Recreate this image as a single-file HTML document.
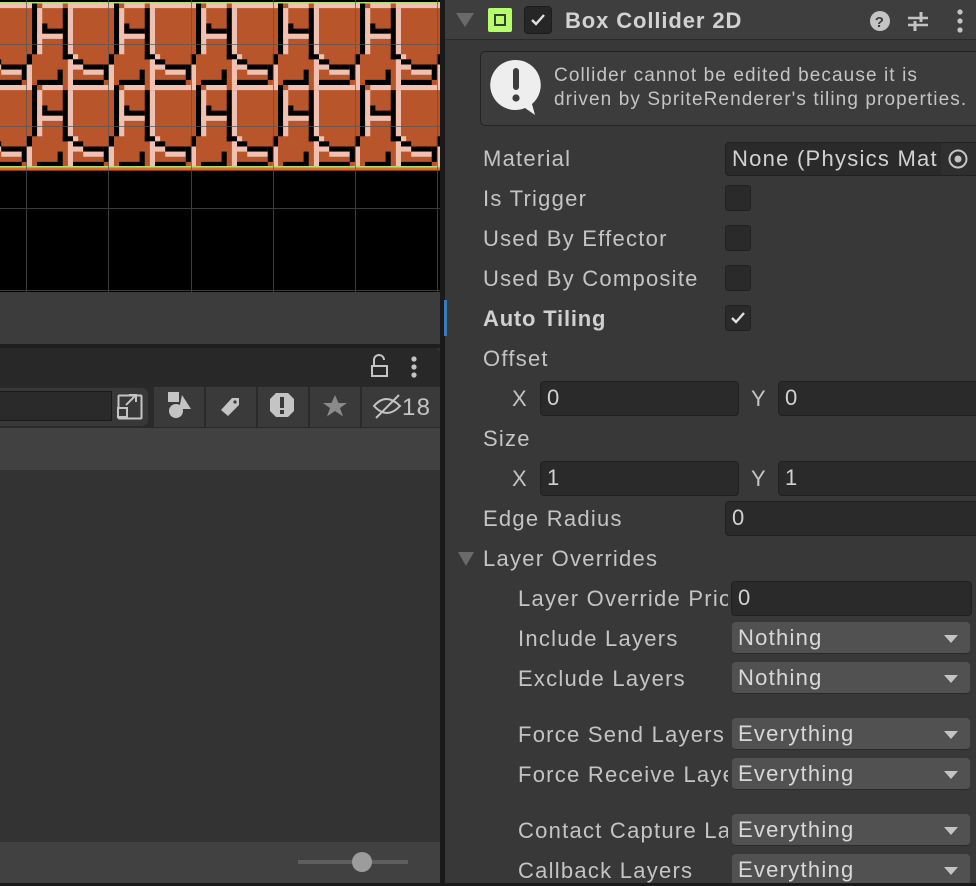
<!DOCTYPE html>
<html><head><meta charset="utf-8"><style>
*{margin:0;padding:0;box-sizing:border-box}
body{width:976px;height:886px;overflow:hidden;background:#383838;font-family:"Liberation Sans",sans-serif;color:#c4c4c4;position:relative;letter-spacing:1.25px}
.a{position:absolute}
.lbl{position:absolute;font-size:22px;line-height:26px;white-space:nowrap}
.fld{position:absolute;background:#2a2a2a;border:1px solid #212121;border-radius:4px;font-size:22px;line-height:32px;padding-left:6px;color:#d2d2d2;overflow:hidden;white-space:nowrap}
.cb{position:absolute;left:725px;width:26px;height:26px;background:#2a2a2a;border:1px solid #212121;border-radius:3px}
.dd{position:absolute;left:732px;width:238px;height:32px;background:#515151;border-radius:4px;border-bottom:1px solid #2a2a2a;font-size:22px;line-height:32px;padding-left:6px;color:#d8d8d8}
.dd:after{content:"";position:absolute;right:12px;top:13px;border-left:7px solid transparent;border-right:7px solid transparent;border-top:8px solid #c4c4c4}
.tb{position:absolute;top:387px;height:40px;background:#3a3a3a}
</style></head><body>
<div class="a" style="left:0;top:0;width:440px;height:886px;background:#353535"></div>
<svg class="a" style="left:0;top:0" width="440" height="292">
<defs>
<pattern id="b" x="32" y="3" width="82" height="82" patternUnits="userSpaceOnUse">
<g transform="scale(5.125)">
<rect width="16" height="16" fill="#b8552a"/>
<rect x="0" y="0" width="16" height="1" fill="#f0c0b0"/>
<rect x="1" y="0" width="1" height="1" fill="#b8552a"/>
<rect x="6" y="0" width="1" height="1" fill="#b8552a"/>
<rect x="0" y="0" width="1" height="10" fill="#000"/>
<rect x="1" y="1" width="1" height="9" fill="#f0c0b0"/>
<rect x="6" y="1" width="1" height="10" fill="#000"/>
<rect x="7" y="1" width="1" height="10" fill="#f0c0b0"/>
<rect x="2" y="4" width="1" height="1" fill="#000"/>
<rect x="2" y="5" width="4" height="1" fill="#000"/>
<rect x="1" y="6" width="5" height="1" fill="#f0c0b0"/>
<rect x="15" y="10" width="1" height="2" fill="#000"/>
<rect x="15" y="12" width="1" height="4" fill="#f0c0b0"/>
<rect x="6" y="10" width="2" height="1" fill="#000"/>
<rect x="7" y="11" width="1" height="5" fill="#f0c0b0"/>
<rect x="8" y="10" width="1" height="1" fill="#f0c0b0"/>
<rect x="8" y="11" width="2" height="1" fill="#000"/>
<rect x="8" y="12" width="2" height="1" fill="#f0c0b0"/>
<rect x="10" y="12" width="4" height="1" fill="#000"/>
<rect x="10" y="13" width="4" height="1" fill="#f0c0b0"/>
<rect x="14" y="12" width="1" height="3" fill="#000"/>
<rect x="1" y="15" width="5" height="1" fill="#000"/>
<rect x="5" y="13" width="1" height="2" fill="#000"/>
<rect x="8" y="15" width="6" height="1" fill="#000"/>
</g></pattern></defs>
<rect x="0" y="0" width="440" height="292" fill="#000"/>
<rect x="0" y="3" width="440" height="164" fill="url(#b)"/>
<rect x="0" y="2" width="440" height="1.5" fill="#b0e070"/>
<rect x="0" y="166" width="440" height="1.5" fill="#b0e070"/>
<rect x="0" y="167.5" width="440" height="2.5" fill="#e06a2a"/>
<rect x="0" y="170" width="440" height="1" fill="#7a3a1a"/>
<g stroke="#555" stroke-width="1" opacity="0.7">
<line x1="26.5" y1="0" x2="26.5" y2="292"/><line x1="108.5" y1="0" x2="108.5" y2="292"/><line x1="191.5" y1="0" x2="191.5" y2="292"/><line x1="273.5" y1="0" x2="273.5" y2="292"/><line x1="355.5" y1="0" x2="355.5" y2="292"/><line x1="437.5" y1="0" x2="437.5" y2="292"/>
<line x1="0" y1="44.5" x2="440" y2="44.5"/><line x1="0" y1="126.5" x2="440" y2="126.5"/><line x1="0" y1="208.5" x2="440" y2="208.5"/><line x1="0" y1="290.5" x2="440" y2="290.5"/>
</g></svg>
<div class="a" style="left:0;top:292px;width:440px;height:52px;background:#3c3c3c"></div>
<div class="a" style="left:0;top:344px;width:440px;height:4px;background:#1e1e1e"></div>
<div class="a" style="left:0;top:348px;width:440px;height:38px;background:#282828;border-top-right-radius:5px"></div>
<svg class="a" style="left:368px;top:354px" width="60" height="28"><path d="M6 11V6a5 5 0 0 1 10 0" fill="none" stroke="#c4c4c4" stroke-width="2"/><rect x="4" y="12" width="15" height="10" fill="none" stroke="#c4c4c4" stroke-width="2"/><circle cx="46" cy="5" r="2.6" fill="#c4c4c4"/><circle cx="46" cy="13" r="2.6" fill="#c4c4c4"/><circle cx="46" cy="21" r="2.6" fill="#c4c4c4"/></svg>
<div class="a" style="left:0;top:386px;width:440px;height:42px;background:#2a2a2a"></div>
<div class="a" style="left:0;top:388px;width:148px;height:38px;background:#383838;border-radius:0 6px 6px 0"></div>
<div class="a" style="left:0;top:391px;width:112px;height:30px;background:#2a2a2a;border:1px solid #1a1a1a;border-left:none"></div>
<div class="tb" style="left:154px;width:50px"></div>
<div class="tb" style="left:206px;width:50px"></div>
<div class="tb" style="left:258px;width:50px"></div>
<div class="tb" style="left:310px;width:50px"></div>
<div class="tb" style="left:362px;width:78px"></div>
<svg class="a" style="left:0;top:386px" width="440" height="42">
<rect x="118.5" y="9.5" width="23" height="23" rx="1" fill="none" stroke="#c4c4c4" stroke-width="2"/><rect x="118" y="22" width="9" height="9" fill="#383838" stroke="#c4c4c4" stroke-width="2"/><path d="M126 19l10-10M129 9h7v7" fill="none" stroke="#c4c4c4" stroke-width="2"/>
<rect x="168" y="6" width="11" height="10" fill="#c4c4c4"/><circle cx="176" cy="25" r="7" fill="#c4c4c4"/><path d="M182 9l9 14h-12z" fill="#c4c4c4"/>
<path d="M221 24l11-12h7v7l-11 11z" fill="#c4c4c4"/><circle cx="235" cy="16" r="1.6" fill="#3a3a3a"/>
<path d="M276 7h12l6 6v12l-6 6h-12l-6-6v-12z" fill="#c4c4c4"/><rect x="280" y="11" width="4" height="11" fill="#3a3a3a"/><rect x="280" y="24" width="4" height="4" fill="#3a3a3a"/>
<path d="M335 9l3.5 8h8.5l-7 5 3 8.5-8-5.5-8 5.5 3-8.5-7-5h8.5z" fill="#8a8a8a"/>
<path d="M374 20q12-14 26 0q-13 14-26 0z" fill="none" stroke="#c4c4c4" stroke-width="2"/><line x1="376" y1="32" x2="399" y2="9" stroke="#c4c4c4" stroke-width="2"/>
<text x="402" y="29" font-family="Liberation Sans" font-size="24" fill="#c4c4c4">18</text>
</svg>
<div class="a" style="left:0;top:428px;width:440px;height:42px;background:#414141"></div>
<div class="a" style="left:0;top:470px;width:440px;height:372px;background:#333"></div>
<div class="a" style="left:0;top:842px;width:440px;height:41px;background:#414141"></div>
<div class="a" style="left:298px;top:860px;width:110px;height:4px;background:#5e5e5e"></div>
<div class="a" style="left:352px;top:852px;width:20px;height:20px;border-radius:50%;background:#9c9c9c"></div>
<div class="a" style="left:0;top:883px;width:445px;height:3px;background:#1a1a1a"></div>
<div class="a" style="left:440px;top:0;width:5px;height:886px;background:#1a1a1a"></div>
<div class="a" style="left:444px;top:300px;width:3px;height:36px;background:#3a79bb"></div>

<div class="a" style="left:445px;top:0;width:531px;height:40px;background:#3e3e3e;border-bottom:1px solid #2a2a2a"></div>
<div class="a" style="left:456px;top:13px;border-left:9px solid transparent;border-right:9px solid transparent;border-top:14px solid #6a6a6a"></div>
<div class="a" style="left:488px;top:8px;width:24px;height:24px;background:#b4ff6a;border-radius:2px"></div>
<div class="a" style="left:494px;top:14px;width:12px;height:12px;border:2.5px solid #3a3a3a"></div>
<div class="a" style="left:524px;top:6px;width:28px;height:28px;background:#262626;border:1px solid #1c1c1c;border-radius:4px"></div>
<svg class="a" style="left:529px;top:11px" width="18" height="18"><path d="M3 9l4 4 8-9" fill="none" stroke="#e0e0e0" stroke-width="2.4"/></svg>
<div class="lbl" style="left:565px;top:8px;font-weight:bold;font-size:22px;color:#d2d2d2;letter-spacing:0.9px">Box Collider 2D</div>
<svg class="a" style="left:866px;top:8px" width="110" height="26">
<circle cx="14" cy="13" r="10" fill="#c4c4c4"/><text x="14" y="19" text-anchor="middle" font-family="Liberation Sans" font-weight="bold" font-size="15" fill="#3e3e3e">?</text>
<path d="M42 10h20M42 17h20" stroke="#c4c4c4" stroke-width="2.5"/><path d="M55 4v10M49 13v10" stroke="#c4c4c4" stroke-width="3"/>
<circle cx="94" cy="4" r="2.6" fill="#c4c4c4"/><circle cx="94" cy="13" r="2.6" fill="#c4c4c4"/><circle cx="94" cy="22" r="2.6" fill="#c4c4c4"/>
</svg>
<div class="a" style="left:480px;top:51px;width:500px;height:75px;background:#3c3c3c;border:1px solid #232323;border-radius:5px"></div>
<svg class="a" style="left:490px;top:58px" width="60" height="60"><path d="M26 2a25 25 0 1 0 9 48l10 7-3-11a25 25 0 0 0-16-44z" fill="#eee"/><rect x="23" y="10" width="6" height="22" rx="3" fill="#3c3c3c"/><circle cx="26" cy="40" r="3.6" fill="#3c3c3c"/></svg>
<div class="a" style="left:554px;top:64px;font-size:19px;line-height:24px;color:#c4c4c4;white-space:nowrap;letter-spacing:1.1px">Collider cannot be edited because it is<br>driven by SpriteRenderer's tiling properties.</div>

<div class="lbl" style="left:483px;top:146px">Material</div>
<div class="fld" style="left:725px;top:142px;width:256px;height:34px">None (Physics Mat</div>
<div class="a" style="left:941px;top:143px;width:35px;height:32px;background:#2f2f2f"></div>
<svg class="a" style="left:946px;top:148px" width="24" height="22"><circle cx="12" cy="11" r="8.5" fill="none" stroke="#c4c4c4" stroke-width="2"/><circle cx="12" cy="11" r="3.5" fill="#c4c4c4"/></svg>

<div class="lbl" style="left:483px;top:186px">Is Trigger</div><div class="cb" style="top:185px"></div>
<div class="lbl" style="left:483px;top:226px">Used By Effector</div><div class="cb" style="top:225px"></div>
<div class="lbl" style="left:483px;top:266px">Used By Composite</div><div class="cb" style="top:265px"></div>
<div class="lbl" style="left:483px;top:306px;font-weight:bold;color:#d0d0d0;letter-spacing:0.8px">Auto Tiling</div><div class="cb" style="top:305px"></div>
<svg class="a" style="left:729px;top:309px" width="18" height="18"><path d="M3 9l4 4 8-9" fill="none" stroke="#e0e0e0" stroke-width="2.4"/></svg>
<div class="lbl" style="left:483px;top:346px">Offset</div>
<div class="lbl" style="left:512px;top:386px">X</div><div class="fld" style="left:540px;top:381px;width:199px;height:35px">0</div>
<div class="lbl" style="left:751px;top:386px">Y</div><div class="fld" style="left:778px;top:381px;width:210px;height:35px">0</div>
<div class="lbl" style="left:483px;top:426px">Size</div>
<div class="lbl" style="left:512px;top:466px">X</div><div class="fld" style="left:540px;top:461px;width:199px;height:35px">1</div>
<div class="lbl" style="left:751px;top:466px">Y</div><div class="fld" style="left:778px;top:461px;width:210px;height:35px">1</div>
<div class="lbl" style="left:483px;top:506px">Edge Radius</div><div class="fld" style="left:725px;top:501px;width:260px;height:35px">0</div>
<div class="a" style="left:458px;top:552px;border-left:8px solid transparent;border-right:8px solid transparent;border-top:14px solid #6a6a6a"></div>
<div class="lbl" style="left:483px;top:546px">Layer Overrides</div>
<div class="lbl" style="left:518px;top:586px;width:210px;overflow:hidden">Layer Override Priority</div>
<div class="fld" style="left:731px;top:581px;width:241px;height:35px">0</div>
<div class="lbl" style="left:518px;top:626px">Include Layers</div><div class="dd" style="top:622px">Nothing</div>
<div class="lbl" style="left:518px;top:666px">Exclude Layers</div><div class="dd" style="top:662px">Nothing</div>
<div class="lbl" style="left:518px;top:722px;width:210px;overflow:hidden">Force Send Layers</div><div class="dd" style="top:718px">Everything</div>
<div class="lbl" style="left:518px;top:762px;width:210px;overflow:hidden">Force Receive Layers</div><div class="dd" style="top:758px">Everything</div>
<div class="lbl" style="left:518px;top:818px;width:210px;overflow:hidden">Contact Capture Layers</div><div class="dd" style="top:814px">Everything</div>
<div class="lbl" style="left:518px;top:858px">Callback Layers</div><div class="dd" style="top:854px">Everything</div>
<div class="a" style="left:445px;top:883px;width:531px;height:3px;background:#1a1a1a"></div>
</body></html>
